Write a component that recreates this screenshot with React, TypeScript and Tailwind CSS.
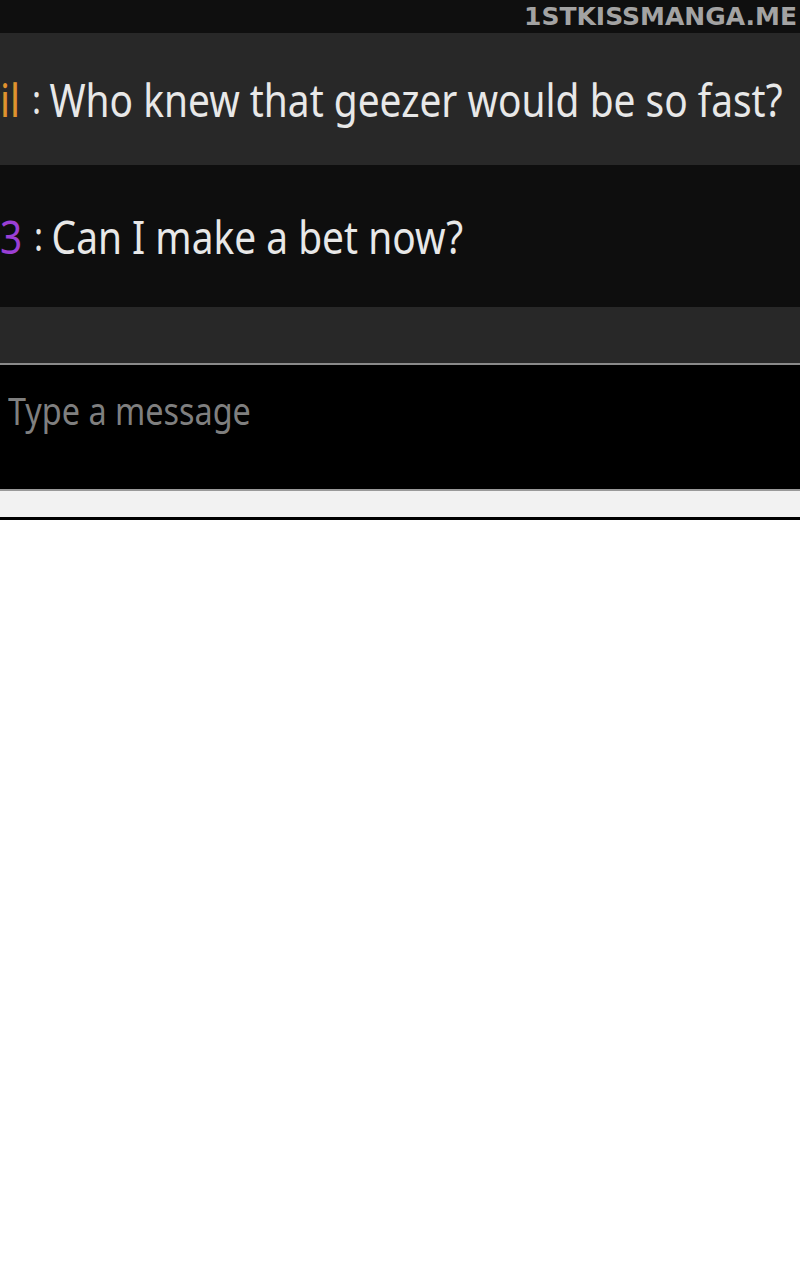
export default function App() {
  return (
    <div className="w-[800px] h-[1280px] bg-white flex flex-col overflow-hidden" style={{ fontFamily: '"Noto Sans", sans-serif' }}>
      {/* top bar with watermark */}
      <div className="h-[33px] bg-[#0f0f0f] flex items-center justify-end pr-[3px]">
        <span className="text-[25px] font-bold text-[#a3a3a3] leading-none" style={{ fontFamily: '"DejaVu Sans", sans-serif' }}>
          1STKISSMANGA.ME
        </span>
      </div>

      <div className="h-[132px] bg-[#282828] flex items-center whitespace-nowrap">
        <div className="flex items-center origin-left scale-x-[0.845]">
          <span className="text-[46px] leading-none text-[#e0922e]">il</span>
          <span className="text-[40px] leading-none text-[#e6e6e6] ml-[14px] mr-[10px]">:</span>
          <span className="text-[46px] leading-none text-[#e8e8e8]">Who knew that geezer would be so fast?</span>
        </div>
      </div>

      <div className="h-[142px] bg-[#0e0e0e] flex items-center whitespace-nowrap">
        <div className="flex items-center origin-left scale-x-[0.845]">
          <span className="text-[46px] leading-none text-[#9b3fd4]">3</span>
          <span className="text-[40px] leading-none text-[#e6e6e6] ml-[14px] mr-[10px]">:</span>
          <span className="text-[46px] leading-none text-[#e8e8e8]">Can I make a bet now?</span>
        </div>
      </div>

      <div className="h-[56px] bg-[#282828]" />
      <div className="h-[2px] bg-[#8a8a8a]" />

      <div className="h-[124px] bg-black pt-[25px] pl-[8px]">
        <div className="origin-left scale-x-[0.83] whitespace-nowrap">
          <span className="text-[39px] leading-none text-[#7f7f7f]">Type a message</span>
        </div>
      </div>
      <div className="h-[2px] bg-[#9a9a9a]" />
      <div className="h-[26px] bg-[#f2f2f2]" />
      <div className="h-[3px] bg-black" />
      <div className="flex-1 bg-white" />
    </div>
  );
}
